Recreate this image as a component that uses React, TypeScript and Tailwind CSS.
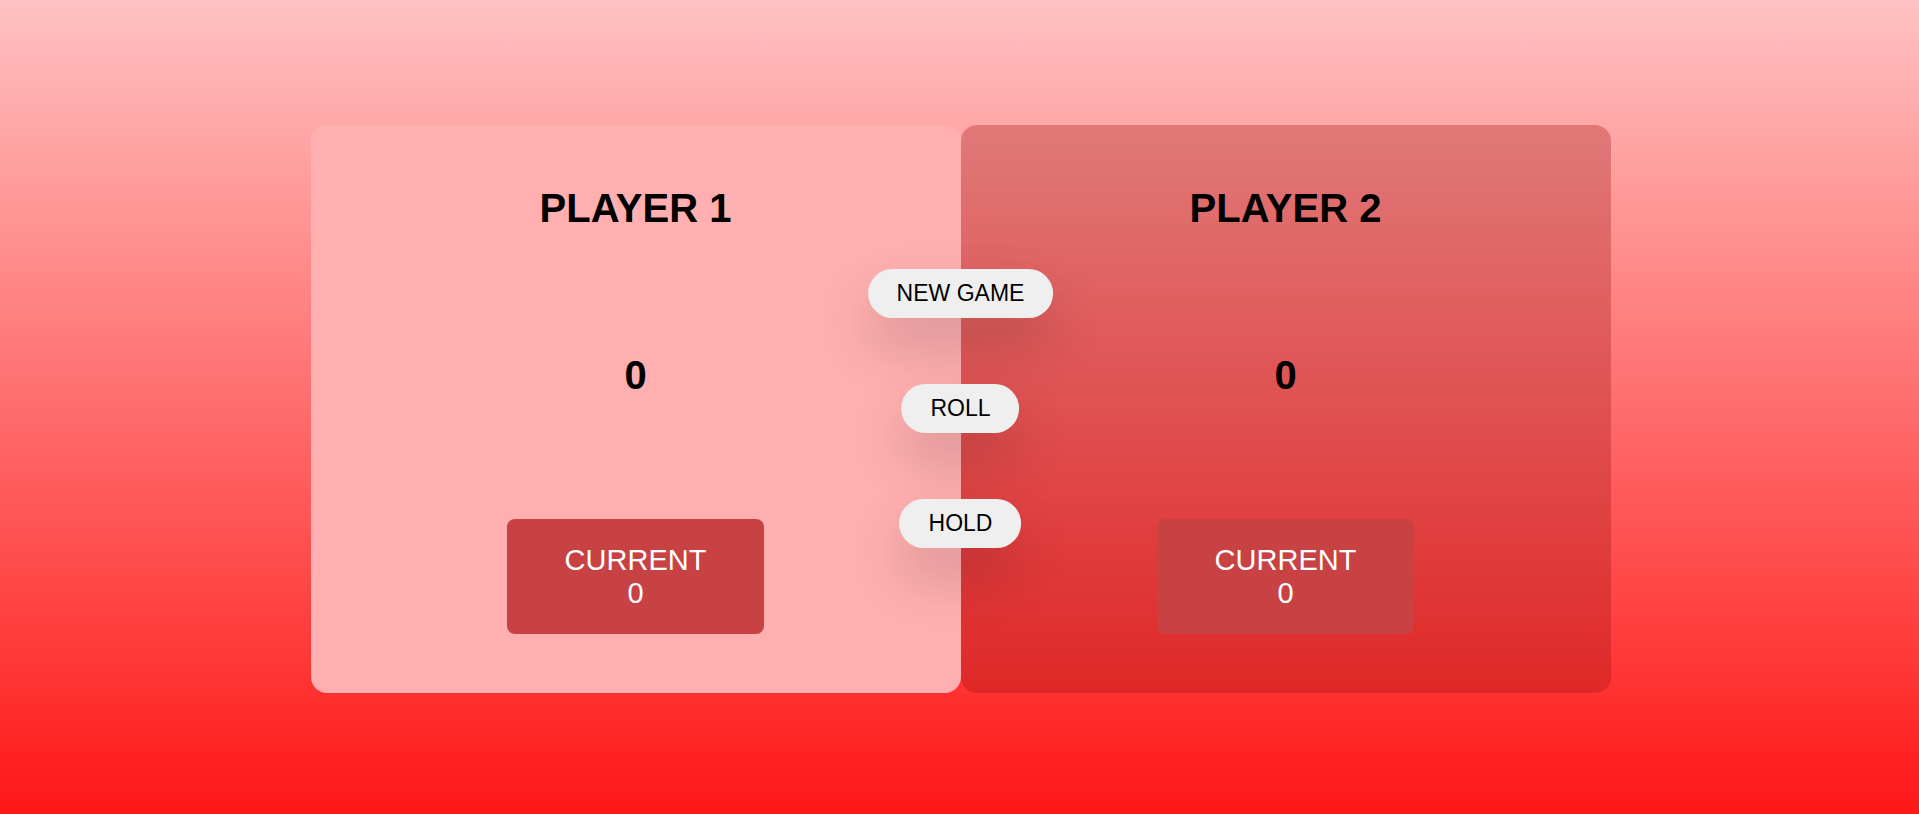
import React from "react";

const players = [
  { name: "PLAYER 1", score: 0, current: 0, active: true },
  { name: "PLAYER 2", score: 0, current: 0, active: false },
];

const actions = ["NEW GAME", "ROLL", "HOLD"];

function Player({ name, score, current, active }: { name: string; score: number; current: number; active: boolean }) {
  return (
    <section
      className={`flex-1 h-full rounded-2xl flex flex-col items-center justify-between pt-[60px] pb-[59px] ${
        active ? "bg-[#ffafaf]" : "bg-[rgba(160,22,22,0.32)]"
      }`}
    >
      <h2 className="text-[40px] leading-[46px] font-bold text-black">{name}</h2>
      <p className="text-[40px] leading-[46px] font-bold text-black">{score}</p>
      <div className="w-[257px] h-[115px] rounded-lg bg-[#c84244] flex flex-col items-center justify-center text-white text-[29px] leading-[33px]">
        <span>CURRENT</span>
        <span>{current}</span>
      </div>
    </section>
  );
}

export default function App() {
  return (
    <div
      className="h-screen w-full flex items-center justify-center bg-[linear-gradient(to_bottom,#ffc2c2,#ff1717)]"
      style={{ fontFamily: '"Liberation Sans", Arial, sans-serif' }}
    >
      <main className="relative w-[1300px] h-[568px] flex mt-[4px] ml-[2px]">
        {players.map((p) => (
          <Player key={p.name} {...p} />
        ))}

        {/* botões ficam por cima da divisória entre os jogadores */}
        <div className="absolute left-1/2 -translate-x-1/2 top-[144px] flex flex-col items-center gap-[66px]">
          {actions.map((label) => (
            <button
              key={label}
              className="bg-[#efefef] text-black text-[23px] leading-[27px] px-[29px] py-[11px] rounded-full shadow-[0_28px_56px_rgba(0,0,0,0.16)]"
            >
              {label}
            </button>
          ))}
        </div>
      </main>
    </div>
  );
}
